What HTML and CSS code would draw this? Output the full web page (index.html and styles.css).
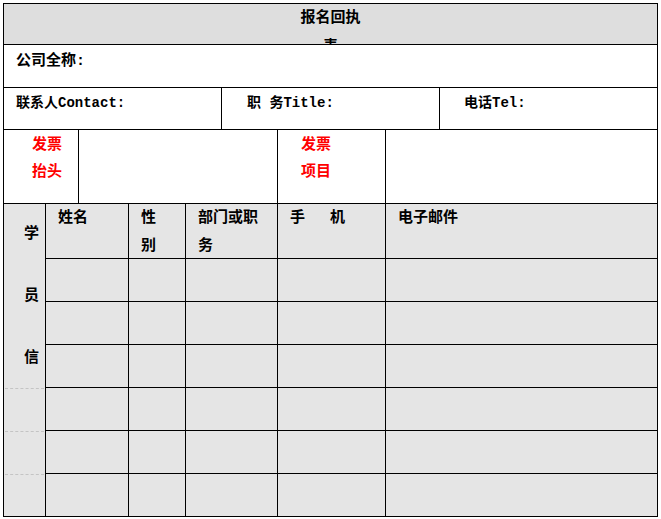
FILE: index.html
```html
<!DOCTYPE html>
<html lang="zh">
<head>
<meta charset="utf-8">
<title>报名回执表</title>
<link rel="stylesheet" href="styles.css">
</head>
<body>
<div class="sheet">
  <div class="title"><div class="t1">报名回执</div><div class="t2">表</div></div>
  <div class="row company"><div class="cell">公司全称:</div></div>
  <div class="row contact">
    <div class="cell c1">联系人Contact:</div>
    <div class="cell c2">职 务Title:</div>
    <div class="cell c3">电话Tel:</div>
  </div>
  <div class="row invoice">
    <div class="cell red r1">发票<br>抬头</div>
    <div class="cell"></div>
    <div class="cell red r3">发票<br>项目</div>
    <div class="cell last"></div>
  </div>
  <div class="students">
    <div class="side">
      <div class="side-label">学<br>员<br>信</div>
      <div class="side-seg"></div>
      <div class="side-seg"></div>
      <div class="side-seg"></div>
    </div>
    <div class="th">姓名</div>
    <div class="th">性<br>别</div>
    <div class="th">部门或职<br>务</div>
    <div class="th">手<span class="gap"></span>机</div>
    <div class="th end">电子邮件</div>

    <div class="td"></div><div class="td"></div><div class="td"></div><div class="td"></div><div class="td end"></div>
    <div class="td"></div><div class="td"></div><div class="td"></div><div class="td"></div><div class="td end"></div>
    <div class="td"></div><div class="td"></div><div class="td"></div><div class="td"></div><div class="td end"></div>
    <div class="td"></div><div class="td"></div><div class="td"></div><div class="td"></div><div class="td end"></div>
    <div class="td"></div><div class="td"></div><div class="td"></div><div class="td"></div><div class="td end"></div>
    <div class="td bottom"></div><div class="td bottom"></div><div class="td bottom"></div><div class="td bottom"></div><div class="td bottom end"></div>
  </div>
</div>
</body>
</html>
```

FILE: styles.css
```css
* { box-sizing: border-box; }

body {
  margin: 0;
  background: #ffffff;
  font-family: "Liberation Mono", "Noto Sans CJK SC", monospace;
  font-weight: bold;
  font-size: 14px;
  color: #000;
}

.sheet {
  margin: 3px 0 0 3px;
  width: 655px;
  height: 514px;
  border: 1px solid #000;
  display: flex;
  flex-direction: column;
}

.title {
  height: 41px;
  flex: none;
  background: #dedede;
  border-bottom: 1px solid #000;
  text-align: center;
  font-size: 15px;
  line-height: 28px;
  overflow: hidden;
}

.t1 { padding-top: 1px; }
.t2 { margin-top: 1px; }

.row {
  display: grid;
  flex: none;
  border-bottom: 1px solid #000;
}

.cell {
  border-right: 1px solid #000;
}

.cell:last-child { border-right: none; }

.company {
  height: 43px;
  grid-template-columns: 1fr;
}

.company .cell {
  padding: 7px 0 0 12px;
  line-height: 20px;
  font-size: 15px;
}

.contact {
  height: 42px;
  grid-template-columns: 218px 218px 1fr;
}

.contact .cell {
  padding-top: 5px;
  line-height: 20px;
  font-size: 14px;
}

.contact .c1 { padding-left: 12px; }
.contact .c2 { padding-left: 25px; }
.contact .c3 { padding-left: 24px; }

.invoice {
  height: 74px;
  grid-template-columns: 75px 199px 108px 1fr;
}

.red {
  color: #ff0000;
  font-size: 15px;
  line-height: 27px;
  padding-top: 2px;
}

.r1 { padding-left: 28px; }
.r3 { padding-left: 23px; }

.students {
  flex: 1;
  background: #e5e5e5;
  display: grid;
  grid-template-columns: 42px 83px 57px 92px 108px 1fr;
  grid-template-rows: 55px repeat(5, 43px) 1fr;
}

.side {
  grid-row: 1 / -1;
  grid-column: 1;
  border-right: 1px solid #000;
  display: grid;
  grid-template-rows: 184px 43px 43px 1fr;
}

.side-label {
  padding: 0 0 0 20px;
  font-size: 15px;
  line-height: 62px;
}

.side-seg {
  margin: 0 1px;
  border-top: 1px dashed #c4c4c4;
}

.th, .td {
  border-right: 1px solid #000;
  border-bottom: 1px solid #000;
}

.th {
  font-size: 15px;
  line-height: 28px;
  padding: 1px 0 0 12px;
}

.end { border-right: none; }
.bottom { border-bottom: none; }

.gap {
  display: inline-block;
  width: 25px;
}
```
